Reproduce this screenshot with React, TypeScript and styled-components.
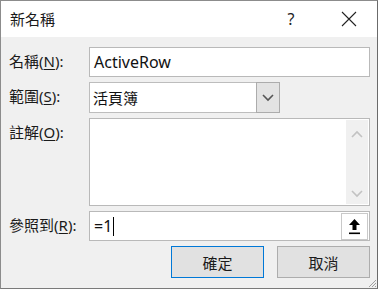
import React from "react";
import styled, { createGlobalStyle } from "styled-components";

const Global = createGlobalStyle`
  html, body { margin: 0; padding: 0; background: #ffffff; }
  body { font-family: "Noto Sans CJK TC", "Noto Sans", sans-serif; }
  * { box-sizing: border-box; }
`;

const Window = styled.div`
  width: 378px;
  height: 289px;
  display: flex;
  flex-direction: column;
  background: #f0f0f0;
  border-left: 1px solid #8c8c8c;
  border-top: 1px solid #8c8c8c;
  border-right: 1px solid #6b6b6b;
  border-bottom: 1px solid #7a7a7a;
  position: relative;
  overflow: hidden;
`;

const TitleBar = styled.div`
  height: 36px;
  background: #ffffff;
  display: flex;
  align-items: center;
  padding-left: 9px;
`;

const Title = styled.div`
  flex: 1;
  font-size: 15px;
  color: #1a1a1a;
  line-height: 20px;
`;

const TitleButton = styled.div<{ $w: number }>`
  width: ${(p) => p.$w}px;
  height: 36px;
  display: flex;
  align-items: center;
  justify-content: center;
  font-family: "Noto Sans", sans-serif;
  font-size: 16px;
  color: #222;
`;

const Body = styled.div`
  flex: 1;
  padding: 10px 7px 0 8px;
  display: flex;
  flex-direction: column;
  gap: 5px;
`;

const Form = styled.div`
  display: grid;
  grid-template-columns: 80px 1fr;
  grid-template-rows: 30px 31px 88px 30px;
  row-gap: 5px;
`;

const Label = styled.div`
  font-size: 15px;
  color: #1a1a1a;
  line-height: 20px;
  padding-top: 4px;
  white-space: nowrap;
`;

const Key = styled.span`
  text-decoration: underline;
  text-underline-offset: 2px;
  font-family: "Noto Sans", sans-serif;
`;

const Paren = styled.span`
  font-family: "Noto Sans", sans-serif;
`;

const TextBox = styled.div`
  background: #ffffff;
  border: 1px solid #b9b9b9;
  display: flex;
  align-items: center;
  padding-left: 4px;
  font-family: "Noto Sans", "Noto Sans CJK TC", sans-serif;
  font-size: 16px;
  color: #111;
`;

const ComboRow = styled.div`
  display: flex;
`;

const Combo = styled.div`
  width: 191px;
  background: #ffffff;
  border: 1px solid #bdbdbd;
  display: flex;
  align-items: stretch;
`;

const ComboText = styled.div`
  flex: 1;
  display: flex;
  align-items: center;
  padding-left: 3px;
  font-size: 15px;
  color: #111;
`;

const ComboButton = styled.div`
  width: 24px;
  background: #e3e3e3;
  border: 1px solid #acacac;
  margin: -1px -1px -1px 0;
  display: flex;
  align-items: center;
  justify-content: center;
`;

const Memo = styled.div`
  background: #ffffff;
  border: 1px solid #b9b9b9;
  display: flex;
  justify-content: flex-end;
  padding: 1px;
`;

const ScrollBar = styled.div`
  width: 22px;
  background: #f0f0f0;
  display: flex;
  flex-direction: column;
  justify-content: space-between;
  align-items: center;
  padding: 10px 0 6px;
`;

const RefBox = styled(TextBox)`
  padding-right: 1px;
`;

const RefText = styled.div`
  flex: 1;
  display: flex;
  align-items: center;
`;

const Caret = styled.span`
  display: inline-block;
  width: 1px;
  height: 19px;
  background: #000;
  margin-left: 1px;
`;

const RefButton = styled.div`
  width: 27px;
  height: 27px;
  border: 1px solid #c9c9c9;
  background: #ffffff;
  display: flex;
  align-items: center;
  justify-content: center;
`;

const Buttons = styled.div`
  display: flex;
  justify-content: flex-end;
  gap: 13px;
`;

const Button = styled.div<{ $primary?: boolean }>`
  width: 93px;
  height: 32px;
  background: #e1e1e1;
  border: 1px solid ${(p) => (p.$primary ? "#0078d7" : "#adadad")};
  display: flex;
  align-items: center;
  justify-content: center;
  font-size: 15px;
  color: #1a1a1a;
`;

const Grip = styled.svg`
  position: absolute;
  right: 0;
  bottom: 0;
`;

const Chevron = ({ up, color }: { up?: boolean; color: string }) => (
  <svg width="12" height="8" viewBox="0 0 12 8">
    <polyline
      points={up ? "1,7 6,2 11,7" : "1,1 6,6 11,1"}
      fill="none"
      stroke={color}
      strokeWidth="1.6"
    />
  </svg>
);

export default function App() {
  return (
    <>
      <Global />
      <Window>
        <TitleBar>
          <Title>新名稱</Title>
          <TitleButton $w={60}>?</TitleButton>
          <TitleButton $w={56}>
            <svg width="16" height="16" viewBox="0 0 16 16">
              <path d="M1 1 L15 15 M15 1 L1 15" stroke="#222" strokeWidth="1.1" />
            </svg>
          </TitleButton>
        </TitleBar>
        <Body>
          <Form>
            <Label>
              名稱<Paren>(<Key>N</Key>):</Paren>
            </Label>
            <TextBox>ActiveRow</TextBox>

            <Label>
              範圍<Paren>(<Key>S</Key>):</Paren>
            </Label>
            <ComboRow>
              <Combo>
                <ComboText>活頁簿</ComboText>
                <ComboButton>
                  <Chevron color="#555" />
                </ComboButton>
              </Combo>
            </ComboRow>

            <Label>
              註解<Paren>(<Key>O</Key>):</Paren>
            </Label>
            <Memo>
              <ScrollBar>
                <Chevron up color="#c2c2c2" />
                <Chevron color="#c2c2c2" />
              </ScrollBar>
            </Memo>

            <Label>
              參照到<Paren>(<Key>R</Key>):</Paren>
            </Label>
            <RefBox>
              <RefText>
                =1<Caret />
              </RefText>
              <RefButton>
                <svg width="13" height="17" viewBox="0 0 13 17">
                  <path d="M6.5 1 L12 7 L8.5 7 L8.5 12 L4.5 12 L4.5 7 L1 7 Z" fill="#000" />
                  <rect x="1" y="14.5" width="11" height="1.6" fill="#000" />
                </svg>
              </RefButton>
            </RefBox>
          </Form>
          <Buttons>
            <Button $primary>確定</Button>
            <Button>取消</Button>
          </Buttons>
        </Body>
        <Grip width="12" height="12" viewBox="0 0 12 12">
          <path d="M11 4 L4 11 M11 7 L7 11 M11 10 L10 11" stroke="#a0a0a0" strokeWidth="1" />
        </Grip>
      </Window>
    </>
  );
}
